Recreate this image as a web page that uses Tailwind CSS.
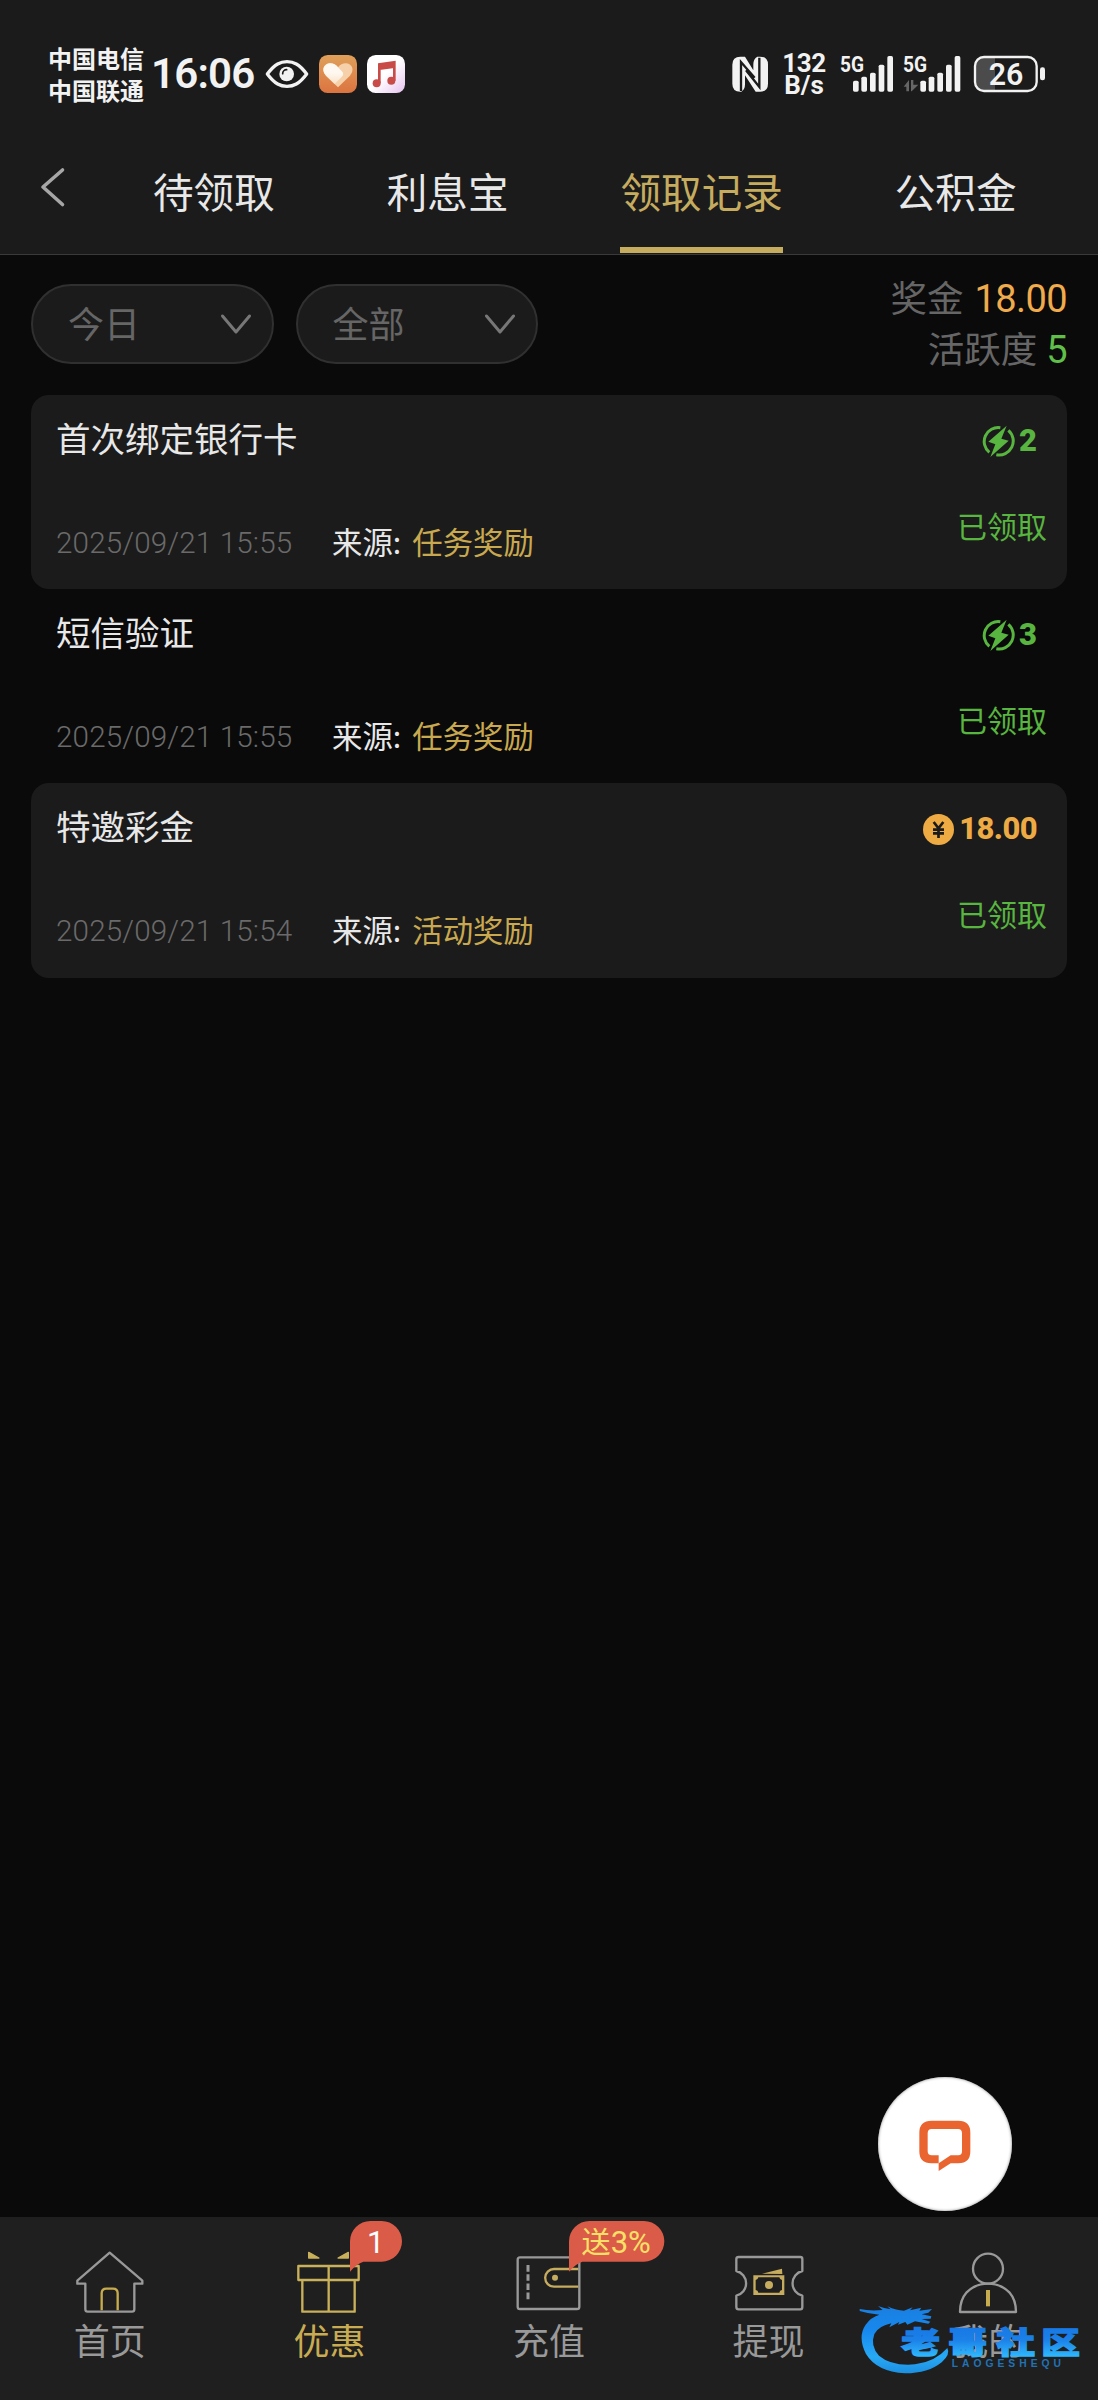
<!DOCTYPE html>
<html lang="zh-CN">
<head>
<meta charset="utf-8">
<meta name="viewport" content="width=device-width">
<title>领取记录</title>
<script src="https://cdn.jsdelivr.net/npm/@tailwindcss/browser@4"></script>
</head>
<body class="bg-[#0a0a0a]">
<div class="relative flex h-[2400px] w-[1098px] flex-col overflow-hidden bg-[#0a0a0a] font-['Noto_Sans_CJK_SC',sans-serif] text-[#e8e8e8]">

  <header class="flex h-[255px] shrink-0 flex-col border-b border-[#3a3a3a] bg-[#1b1b1b]">
    <!-- status bar -->
    <div class="flex h-[148px] shrink-0 items-center justify-between pr-[52px] pl-[48px] text-[#f2f2f2]">
      <div class="flex items-center">
        <div class="w-[96px] text-[24px] leading-[32px] font-bold"><div>中国电信</div><div>中国联通</div></div>
        <div class="ml-[7px] w-[103px] font-['Roboto'] text-[42px] leading-[60px] font-semibold tracking-[-0.8px] whitespace-nowrap">16:06</div>
        <svg class="ml-[11px] h-[30px] w-[44px]" viewBox="705 89 132 90" fill="none" stroke="#f2f2f2"><path d="M712 134C735 103 752 97 771 97S807 103 830 134C807 165 790 171 771 171S735 165 712 134Z" stroke-width="10" stroke-linejoin="round"/><circle cx="770" cy="134" r="22" fill="#f2f2f2" stroke="none"/><path d="M758 133a12 12 0 0 1 12-12" stroke="#1b1b1b" stroke-width="5" stroke-linecap="round"/></svg>
        <svg class="ml-[10px] size-[38px]" viewBox="0 0 114 114"><defs><linearGradient id="hb" x1="0" y1="0" x2="0" y2="1"><stop offset="0" stop-color="#dfa05a"/><stop offset="1" stop-color="#dc7440"/></linearGradient><linearGradient id="hw" x1="0" y1="0" x2="0" y2="1"><stop offset=".4" stop-color="#fff8f0"/><stop offset="1" stop-color="#f8dcbc"/></linearGradient></defs><rect width="114" height="114" rx="26" fill="url(#hb)"/><path d="M57 97L21 62C4 42 18 25 34 25Q48 25 57 37Q66 25 80 25C96 25 110 42 93 62Z" fill="#f5d0a8"/><path d="M57 97L21 62C4 42 18 25 34 25Q48 25 57 37L70 50Q76 58 68 66L47 87Z" fill="url(#hw)"/></svg>
        <svg class="ml-[10px] size-[38px]" viewBox="0 0 114 114"><defs><linearGradient id="mb" x1="0" y1="0" x2="1" y2="1"><stop offset=".5" stop-color="#fff"/><stop offset="1" stop-color="#e6c3ee"/></linearGradient></defs><rect width="114" height="114" rx="26" fill="url(#mb)"/><path d="M37 84V28L82 22V77M37 41L82 35" fill="none" stroke="#c94b48" stroke-width="8"/><path d="M37 28L82 22V37L37 43Z" fill="#c94b48"/><circle cx="29" cy="85" r="12" fill="#c94b48"/><circle cx="73" cy="77" r="12" fill="#c94b48"/></svg>
      </div>
      <div class="flex items-center">
        <svg class="h-[37px] w-[37px]" viewBox="92 79 111 111"><path d="M93 105Q93 81 117 81H131L156 122V104Q156 88 168 81H176Q200 81 200 105V162Q200 186 176 186H163L131 137V164Q131 180 120 186H117Q93 186 93 162Z" fill="#f2f2f2"/><path d="M119 184V97L160 144M134 122L174 172V84" fill="none" stroke="#1b1b1b" stroke-width="7"/></svg>
        <div class="ml-[11px] w-[48px] text-center font-['Roboto'] text-[26px] leading-[22px] font-bold"><div class="tracking-[-0.5px]">132</div><div>B/s</div></div>
        <svg class="ml-[11px] h-[38px] w-[56px] overflow-visible" viewBox="417 75 168 114" fill="#f2f2f2"><text x="420" y="125" font-family="Roboto" font-size="64" font-weight="700" textLength="72" lengthAdjust="spacingAndGlyphs">5G</text><rect x="459" y="152" width="17" height="33" rx="5"/><rect x="484" y="140" width="17" height="45" rx="5"/><rect x="510" y="128" width="17" height="57" rx="5"/><rect x="536" y="104" width="17" height="81" rx="5"/><rect x="562" y="78" width="17" height="107" rx="5"/></svg>
        <svg class="ml-[7px] h-[38px] w-[60px] overflow-visible" viewBox="607 75 180 114" fill="#f2f2f2"><text x="610" y="125" font-family="Roboto" font-size="64" font-weight="700" textLength="72" lengthAdjust="spacingAndGlyphs">5G</text><path d="M612 170L628 150V184H620V170ZM634 184V150H641V164H656L636 184Z" fill="#666"/><rect x="662" y="152" width="17" height="33" rx="5"/><rect x="687" y="140" width="17" height="45" rx="5"/><rect x="713" y="128" width="17" height="57" rx="5"/><rect x="739" y="104" width="17" height="81" rx="5"/><rect x="765" y="78" width="17" height="107" rx="5"/></svg>
        <svg class="ml-[11px] h-[38px] w-[73px] overflow-visible" viewBox="820 75 219 114"><path d="M848 82H886V182H848Q827 182 827 160V104Q827 82 848 82Z" fill="#4b4b4b"/><rect x="826" y="81" width="185" height="102" rx="27" fill="none" stroke="#f2f2f2" stroke-width="7"/><rect x="1021" y="112" width="15" height="39" rx="7" fill="#f2f2f2"/><text x="919" y="164" font-family="Roboto" font-size="92" font-weight="600" text-anchor="middle" fill="#f2f2f2" textLength="104" lengthAdjust="spacingAndGlyphs">26</text></svg>
      </div>
    </div>
    <!-- tabs -->
    <nav class="flex h-[106px] shrink-0 text-[40.6px] leading-[85px] whitespace-nowrap">
      <svg class="mt-[18px] ml-[38px] h-[42px] w-[30px] shrink-0" viewBox="0 0 30 42" fill="none" stroke="#a6a6a6" stroke-width="3.6" stroke-linecap="round" stroke-linejoin="round"><path d="M24.5 4L5 21L24.5 38.500"/></svg>
      <a class="ml-[85px]">待领取</a>
      <a class="ml-28">利息宝</a>
      <a class="ml-28 h-[105px] border-b-[6px] border-[#c6ac5f] text-[#c6ac5f]">领取记录</a>
      <a class="ml-28">公积金</a>
    </nav>
  </header>

  <main class="flex grow flex-col">
    <section class="flex h-[140px] shrink-0 items-start justify-between px-[31px]">
      <div class="mt-[29px] flex gap-[22px] text-[36px] text-[#666]">
        <button class="flex h-[80px] w-[242.500px] items-center justify-between rounded-full border-2 border-[#303030] bg-[#1b1b1b] pr-[18px] pl-[35px]"><span class="mb-[5px]">今日</span><svg class="h-[24px] w-[36px]" viewBox="0 0 36 24" fill="none" stroke="#777" stroke-width="3" stroke-linecap="round" stroke-linejoin="round"><path d="M4.500 4L18 20L31.500 4"/></svg></button>
        <button class="flex h-[80px] w-[242.500px] items-center justify-between rounded-full border-2 border-[#303030] bg-[#1b1b1b] pr-[18px] pl-[35px]"><span class="mb-[5px]">全部</span><svg class="h-[24px] w-[36px]" viewBox="0 0 36 24" fill="none" stroke="#777" stroke-width="3" stroke-linecap="round" stroke-linejoin="round"><path d="M4.500 4L18 20L31.500 4"/></svg></button>
      </div>
      <div class="mt-[16px] text-right text-[36.500px] leading-[51px] text-[#666]">
        <div class="flex h-[51px] justify-end gap-[11px]">奖金<span class="mt-[3px] font-['Roboto'] text-[38px] tracking-[-0.6px] text-[#efab4c]">18.00</span></div>
        <div class="flex h-[51px] justify-end gap-[9px]">活跃度<span class="mt-[3px] font-['Roboto'] text-[38px] tracking-[-0.6px] text-[#5fbf48]">5</span></div>
      </div>
    </section>

    <section class="mx-[31px] flex flex-col">
      <article class="flex h-[194.200px] justify-between rounded-[18px] bg-[#1b1b1b] pl-[25px]">
        <div class="flex flex-col">
          <h2 class="mt-[17px] text-[34.500px] leading-[50px]">首次绑定银行卡</h2>
          <div class="mt-[56px] flex text-[30.400px] leading-[46px]"><time class="mt-[2px] w-[276px] font-['Roboto'] text-[29.600px] font-light tracking-[0.15px] text-[#6a6a6a]">2025/09/21 15:55</time><span>来源:</span><span class="ml-[11px] text-[#c9a94f]">任务奖励</span></div>
        </div>
        <div class="flex flex-col items-end text-[#58b53f]">
          <div class="mt-[30px] mr-[30px] flex h-[32px] items-center gap-[4px]"><svg class="size-[33px]" viewBox="400 119 99 99"><g fill="none" stroke="#58b53f" stroke-width="9"><path d="M455 127A42 42 0 0 0 422 201M479 135A42 42 0 0 1 443 208"/></g><path d="M474 121L419 169L440 177L425 215L480 166L458 160Z" fill="#58b53f"/></svg><b class="font-['Roboto'] text-[31px] font-black">2</b></div>
          <div class="mt-[44.500px] mr-[20px] text-[30px] leading-[46px]">已领取</div>
        </div>
      </article>
      <article class="flex h-[194.200px] justify-between rounded-[18px] pl-[25px]">
        <div class="flex flex-col">
          <h2 class="mt-[17px] text-[34.500px] leading-[50px]">短信验证</h2>
          <div class="mt-[56px] flex text-[30.400px] leading-[46px]"><time class="mt-[2px] w-[276px] font-['Roboto'] text-[29.600px] font-light tracking-[0.15px] text-[#6a6a6a]">2025/09/21 15:55</time><span>来源:</span><span class="ml-[11px] text-[#c9a94f]">任务奖励</span></div>
        </div>
        <div class="flex flex-col items-end text-[#58b53f]">
          <div class="mt-[30px] mr-[30px] flex h-[32px] items-center gap-[4px]"><svg class="size-[33px]" viewBox="400 119 99 99"><g fill="none" stroke="#58b53f" stroke-width="9"><path d="M455 127A42 42 0 0 0 422 201M479 135A42 42 0 0 1 443 208"/></g><path d="M474 121L419 169L440 177L425 215L480 166L458 160Z" fill="#58b53f"/></svg><b class="font-['Roboto'] text-[31px] font-black">3</b></div>
          <div class="mt-[44.500px] mr-[20px] text-[30px] leading-[46px]">已领取</div>
        </div>
      </article>
      <article class="flex h-[194.200px] justify-between rounded-[18px] bg-[#1b1b1b] pl-[25px]">
        <div class="flex flex-col">
          <h2 class="mt-[17px] text-[34.500px] leading-[50px]">特邀彩金</h2>
          <div class="mt-[56px] flex text-[30.400px] leading-[46px]"><time class="mt-[2px] w-[276px] font-['Roboto'] text-[29.600px] font-light tracking-[0.15px] text-[#6a6a6a]">2025/09/21 15:54</time><span>来源:</span><span class="ml-[11px] text-[#c9a94f]">活动奖励</span></div>
        </div>
        <div class="flex flex-col items-end text-[#58b53f]">
          <div class="mt-[30px] mr-[30px] flex h-[32px] items-center gap-[5px] text-[#efab43]"><svg class="size-[31px]" viewBox="0 0 93 93"><circle cx="46.500" cy="46.500" r="46.500" fill="#efab43"/><path d="M32 24L46.500 43L61 24M46.500 43V72M30 47H63M30 58H63" fill="none" stroke="#1b1b1b" stroke-width="8"/></svg><b class="font-['Roboto'] text-[31px] font-extrabold tracking-[-0.6px]">18.00</b></div>
          <div class="mt-[44.500px] mr-[20px] text-[30px] leading-[46px]">已领取</div>
        </div>
      </article>
    </section>
  </main>

  <!-- floating chat button -->
  <button class="absolute top-[2077px] left-[878px] flex size-[134px] items-center justify-center rounded-full bg-white shadow-[inset_0_0_3px_#888]">
    <svg class="mt-[3px] h-[52px] w-[54px]" viewBox="206 181 162 156"><path fill-rule="evenodd" fill="#ea6430" d="M247 183H327Q363 183 363 219V275Q363 311 327 311H304L268 334V311H246Q210 311 210 275V219Q210 183 247 183ZM247 208Q235 208 235 221V275Q235 287 247 287H268V311L304 287H327Q338 287 338 275V221Q338 208 326 208Z"/></svg>
  </button>

  <!-- bottom navigation -->
  <nav class="grid h-[183px] shrink-0 grid-cols-5 bg-[#1f1f1f] text-[36px] leading-[51px] text-[#999]">
    <a class="flex flex-col items-center pt-[33px]">
      <svg class="h-[64px] w-[72px]" viewBox="222 150 216 192" fill="none" stroke="#999" stroke-width="7" stroke-linejoin="round"><path d="M329 158L427 242V251H403V328Q403 335 396 335H263Q256 335 256 328V251H232V242Z"/><path d="M305 331V280Q305 266 319 266H339Q353 266 353 280V331" stroke="#c6ac4f"/></svg>
      <span>首页</span>
    </a>
    <a class="relative flex flex-col items-center pt-[33px] text-[#c9ab52]">
      <svg class="h-[64px] w-[72px]" viewBox="880 150 216 192" fill="none" stroke="#c9b05a" stroke-width="7" stroke-linejoin="round"><path d="M896 198H1077V240H896ZM908 240H1065V335H908ZM987 198V335"/><path d="M927 157L958 174H927ZM1046 157L1015 174H1046Z" fill="#c9b05a" stroke-width="4"/></svg>
      <span>优惠</span>
      <div class="absolute top-[4px] left-[130px] h-[41px] w-[52px] text-center font-['Roboto'] text-[31px] leading-[43px] text-white">
        <svg class="absolute top-0 left-0 h-[51px] w-[52px]" viewBox="0 0 156 153"><path d="M61 0H95A61 61 0 0 1 95 122H40Q20 128 0 152V61A61 61 0 0 1 61 0Z" fill="#d95b48"/></svg><span class="relative">1</span>
      </div>
    </a>
    <a class="relative flex flex-col items-center pt-[33px]">
      <svg class="h-[64px] w-[72px]" viewBox="279 150 216 192" fill="none" stroke="#999" stroke-width="7"><rect x="293" y="172" width="185" height="155" rx="7"/><path d="M324 195V298" stroke-width="9" stroke-dasharray="20 7.600"/><path d="M475 207H402A26 26 0 0 0 402 260H475" stroke="#c6ac5f"/><circle cx="405" cy="233" r="9" fill="#c6ac5f" stroke="none"/></svg>
      <span>充值</span>
      <div class="absolute top-[4px] left-[130px] flex h-[41px] w-[96px] justify-center pr-[2px] text-[29px] leading-[39px] whitespace-nowrap text-[#ffe066]">
        <svg class="absolute top-0 left-0 h-[51px] w-[96px]" viewBox="0 0 288 153"><path d="M61 0H225A61 61 0 0 1 225 122H40Q20 128 0 152V61A61 61 0 0 1 61 0Z" fill="#d95b48"/></svg><span class="relative">送</span><span class="relative mt-[2px] font-['Roboto'] text-[31px]">3%</span>
      </div>
    </a>
    <a class="flex flex-col items-center pt-[33px]">
      <svg class="h-[64px] w-[72px]" viewBox="938 150 216 192" fill="none" stroke="#999" stroke-width="7" stroke-linejoin="round"><path d="M955 171H1140Q1146 171 1146 177V213A38 38 0 0 0 1146 287V321Q1146 328 1140 328H955Q948 328 948 321V287A38 38 0 0 0 948 213V177Q948 171 955 171Z"/><g fill="#c6ac5f" stroke="none"><path fill-rule="evenodd" d="M999 226H1092V285H999ZM1014 232Q1013 239 1006 240V270Q1013 271 1014 278H1077Q1078 271 1085 270V240Q1078 239 1077 232Z"/><circle cx="1046" cy="255" r="12"/><path d="M1025 221L1085 206L1086 222Z"/></g></svg>
      <span>提现</span>
    </a>
    <a class="flex flex-col items-center pt-[33px]">
      <svg class="h-[64px] w-[72px]" viewBox="397 150 216 192" fill="none" stroke="#999" stroke-width="7" stroke-linejoin="round"><circle cx="505" cy="206" r="45"/><path d="M421 336Q421 300 441 277Q467 251 505 251Q543 251 569 277Q589 300 589 336Z"/><path d="M505 270V319" stroke="#c6ac4f" stroke-width="12"/></svg>
      <span>我的</span>
    </a>
  </nav>

  <!-- community logo -->
  <svg class="absolute top-[2296px] left-[856px] h-[82px] w-[232px]" viewBox="108 288 696 246">
    <defs><linearGradient id="wm" gradientUnits="userSpaceOnUse" x1="0" y1="320" x2="0" y2="520"><stop offset="0" stop-color="#1a7fe0"/><stop offset=".35" stop-color="#1788ee"/><stop offset=".75" stop-color="#27a9f5"/><stop offset="1" stop-color="#1d8fe0"/></linearGradient>
    <linearGradient id="wt" gradientUnits="userSpaceOnUse" x1="0" y1="-80" x2="0" y2="8"><stop offset="0" stop-color="#1878e4"/><stop offset=".45" stop-color="#1b80e8"/><stop offset="1" stop-color="#2db4fb"/></linearGradient></defs>
    <path fill="url(#wm)" d="M119 327Q150 334 188 330L174 318Q195 326 212 328L202 319Q230 332 252 332L278 322L270 331L304 323L298 332L336 327L325 338L305 343L334 349L332 356L305 357L331 365L325 371L285 364L262 374L256 366L234 374L238 366L208 382L214 370Q176 378 163 402Q150 438 177 467Q215 499 285 493Q345 486 382 444Q392 462 366 486Q325 520 255 520Q170 515 138 462Q112 410 137 374Q152 352 178 344Q148 342 119 333Z"/>
    <g fill="url(#wt)" stroke="url(#wt)" stroke-width="4" font-weight="900" font-size="93" text-anchor="middle">
      <text transform="translate(302 458) scale(1.25 .97)">老</text><text transform="translate(443 458) scale(1.25 .97)">哥</text><text transform="translate(587 458) scale(1.25 .97)">社</text><text transform="translate(722 458) scale(1.25 .97)">区</text>
    </g>
    <text x="395" y="500" font-family="Liberation Sans" font-size="31" font-weight="700" fill="#2272b4" textLength="328">LAOGESHEQU</text>
  </svg>
</div>
</body>
</html>
